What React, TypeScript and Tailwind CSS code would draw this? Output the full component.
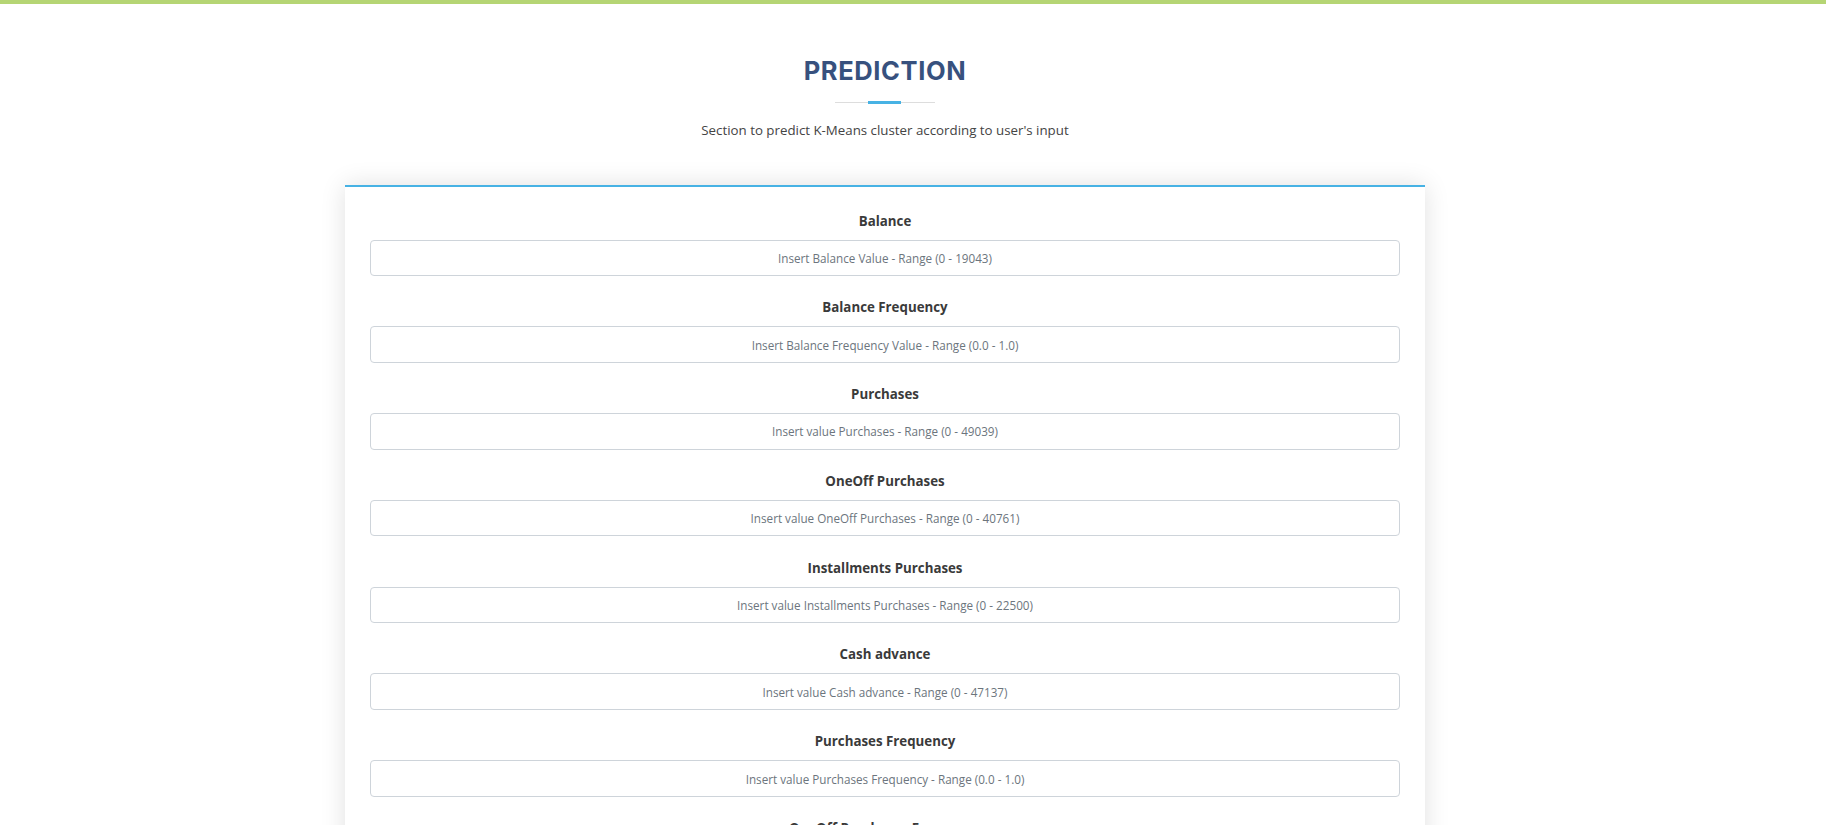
const fields = [
  { label: "Balance", hint: "Insert Balance Value - Range (0 - 19043)" },
  { label: "Balance Frequency", hint: "Insert Balance Frequency Value - Range (0.0 - 1.0)" },
  { label: "Purchases", hint: "Insert value Purchases - Range (0 - 49039)" },
  { label: "OneOff Purchases", hint: "Insert value OneOff Purchases - Range (0 - 40761)" },
  { label: "Installments Purchases", hint: "Insert value Installments Purchases - Range (0 - 22500)" },
  { label: "Cash advance", hint: "Insert value Cash advance - Range (0 - 47137)" },
  { label: "Purchases Frequency", hint: "Insert value Purchases Frequency - Range (0.0 - 1.0)" },
  { label: "OneOff Purchases Frequency", hint: "Insert value OneOff Purchases Frequency - Range (0.0 - 1.0)" },
  { label: "Purchases Installments Frequency", hint: "Insert value Purchases Installments Frequency - Range (0.0 - 1.0)" },
  { label: "Cash Advance Frequency", hint: "Insert value Cash Advance Frequency - Range (0.0 - 1.5)" },
  { label: "Cash Advance TRX", hint: "Insert value Cash Advance TRX - Range (0 - 123)" },
  { label: "Purchases TRX", hint: "Insert value Purchases TRX - Range (0 - 358)" },
  { label: "Credit Limit", hint: "Insert value Credit Limit - Range (50 - 30000)" },
  { label: "Payments", hint: "Insert value Payments - Range (0 - 50721)" },
  { label: "Minimum Payments", hint: "Insert value Minimum Payments - Range (0 - 76406)" },
  { label: "PRC Full Payment", hint: "Insert value PRC Full Payment - Range (0.0 - 1.0)" },
  { label: "Tenure", hint: "Insert value Tenure - Range (6 - 12)" },
];

function Field({ label, hint }: { label: string; hint: string }) {
  return (
    <div className="mb-[22.3px]">
      <label className="block h-[18px] mb-[10px] text-center text-[13.3px] leading-[18px] font-bold text-[#3a3a3a]">
        {label}
      </label>
      <input
        type="text"
        placeholder={hint}
        className="block w-full h-[36.5px] border border-[#ced4da] rounded-[4px] bg-white text-center text-[11.7px] text-[#444] placeholder:text-[#6c757d] outline-none"
      />
    </div>
  );
}

export default function App() {
  return (
    <div className="min-h-screen bg-white text-[#444444]" style={{ fontFamily: '"Open Sans", "Noto Sans", sans-serif' }}>
      <div className="h-[4px] bg-[#b5d574]" />
      <div className="w-[1770px] flex flex-col items-center">
        {/* section title */}
        <div className="pt-[50px] flex flex-col items-center">
          <h2
            className="text-[25.5px] leading-[34px] font-bold uppercase tracking-[0.6px] text-[#37517e]"
            style={{ fontFamily: 'Inter, "Noto Sans", sans-serif' }}
          >
            Prediction
          </h2>
          <div className="mt-[13px] flex items-center w-[100px] h-[3px]">
            <div className="flex-1 h-[1px] bg-[#dddddd]" />
            <div className="w-[33px] h-[2.5px] bg-[#47b2e4]" />
            <div className="flex-1 h-[1px] bg-[#dddddd]" />
          </div>
          <p className="mt-[16px] text-[13.3px] leading-[20px] text-[#444444]">
            Section to predict K-Means cluster according to user's input
          </p>
        </div>

        {/* form card */}
        <div className="mt-[45px] w-[1080px] bg-white border-t-[2px] border-[#47b2e4] shadow-[0_0_24px_rgba(0,0,0,0.12)] px-[25px] pt-[24.5px] pb-[20px]">
          {fields.map((f) => (
            <Field key={f.label} label={f.label} hint={f.hint} />
          ))}
          <div className="flex justify-center pb-[10px]">
            <button className="px-[28px] py-[9px] rounded-[4px] bg-[#47b2e4] text-white text-[13.3px]">
              Predict
            </button>
          </div>
        </div>
      </div>
    </div>
  );
}
